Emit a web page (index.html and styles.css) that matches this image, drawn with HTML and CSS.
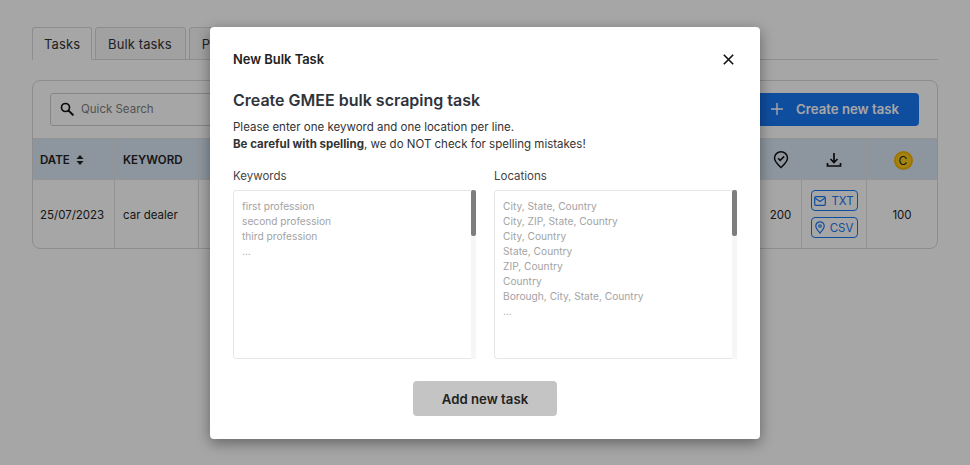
FILE: index.html
```html
<!DOCTYPE html>
<html lang="en">
<head>
  <meta charset="UTF-8">
  <title>New Bulk Task</title>
  <link rel="stylesheet" href="styles.css">
</head>
<body>
  <div class="page">
    <div class="tabs">
      <div class="tab active">Tasks</div>
      <div class="tab">Bulk tasks</div>
      <div class="tab">Proxies</div>
      <div class="tab">Settings</div>
    </div>

    <div class="panel">
      <div class="toolbar">
        <div class="search">
          <svg width="14" height="14" viewBox="0 0 14 14"><circle cx="5.500" cy="5.500" r="4" fill="none" stroke="#111" stroke-width="1.700"/><path d="M8.600 8.600 12.800 12.800" stroke="#111" stroke-width="2" stroke-linecap="round"/></svg>
          <span>Quick Search</span>
        </div>
        <div class="create">
          <svg width="14" height="14" viewBox="0 0 14 14"><path d="M7 1v12M1 7h12" stroke="#fff" stroke-width="1.400" fill="none"/></svg>
          <span>Create new task</span>
        </div>
      </div>

      <div class="row head">
        <div class="cell">DATE
          <svg class="sort" width="8" height="10" viewBox="0 0 8 10"><path d="M4 0 7.500 4H.5zM4 10 .5 6h7z" fill="#222"/></svg>
        </div>
        <div class="cell">KEYWORD</div>
        <div class="cell"></div>
        <div class="cell mid">
          <svg width="16" height="18" viewBox="0 0 16 18"><path d="M8 16.500C4.500 13.200 1.500 10.600 1.500 7a6.500 6.200 0 0 1 13 0c0 3.600-3 6.200-6.500 9.500z" fill="none" stroke="#111" stroke-width="1.500"/><path d="m5 7.200 2.200 2.200 4-4" fill="none" stroke="#111" stroke-width="1.500"/></svg>
        </div>
        <div class="cell mid">
          <svg width="16" height="16" viewBox="0 0 16 16"><path d="M8 1v9M4.500 7 8 10.500 11.500 7" fill="none" stroke="#111" stroke-width="1.700"/><path d="M1.500 11v3h13v-3" fill="none" stroke="#111" stroke-width="1.700"/></svg>
        </div>
        <div class="cell mid"><span class="coin">C</span></div>
      </div>

      <div class="row body">
        <div class="cell">25/07/2023</div>
        <div class="cell">car dealer</div>
        <div class="cell"></div>
        <div class="cell mid">200</div>
        <div class="cell mid stack">
          <span class="tag">
            <svg width="12" height="10" viewBox="0 0 12 10"><rect x=".7" y=".7" width="10.600" height="8.600" rx="1" fill="none" stroke="#1878f0" stroke-width="1.200"/><path d="m1 2 5 3.500L11 2" fill="none" stroke="#1878f0" stroke-width="1.200"/></svg>
            TXT
          </span>
          <span class="tag">
            <svg width="10" height="13" viewBox="0 0 10 13"><path d="M5 12C2.500 9.300.8 7.500.8 5a4.200 4.200 0 0 1 8.400 0c0 2.500-1.700 4.300-4.200 7z" fill="none" stroke="#1878f0" stroke-width="1.200"/><circle cx="5" cy="5" r="1.300" fill="none" stroke="#1878f0" stroke-width="1.100"/></svg>
            CSV
          </span>
        </div>
        <div class="cell mid">100</div>
      </div>
    </div>
  </div>

  <div class="overlay"></div>

  <div class="modal">
    <div class="modal-top">
      <span class="modal-name">New Bulk Task</span>
      <svg width="11" height="11" viewBox="0 0 11 11"><path d="m.8.8 9.400 9.400M10.200.8.8 10.200" stroke="#111" stroke-width="1.600" fill="none"/></svg>
    </div>
    <h2>Create GMEE bulk scraping task</h2>
    <p class="intro">Please enter one keyword and one location per line.<br><b>Be careful with spelling</b>, we do NOT check for spelling mistakes!</p>
    <div class="fields">
      <div class="field">
        <label>Keywords</label>
        <div class="box">
          <div class="hint">first profession<br>second profession<br>third profession<br>...</div>
          <div class="track"><div class="thumb"></div></div>
        </div>
      </div>
      <div class="field">
        <label>Locations</label>
        <div class="box">
          <div class="hint">City, State, Country<br>City, ZIP, State, Country<br>City, Country<br>State, Country<br>ZIP, Country<br>Country<br>Borough, City, State, Country<br>...</div>
          <div class="track"><div class="thumb"></div></div>
        </div>
      </div>
    </div>
    <div class="actions">
      <div class="add">Add new task</div>
    </div>
  </div>
</body>
</html>
```

FILE: styles.css
```css
* {
  box-sizing: border-box;
}

body {
  margin: 0;
  height: 465px;
  overflow: hidden;
  background: #fff;
  font-family: 'Inter', sans-serif;
  color: #262626;
}

.page {
  padding: 27px 32px 0;
}

.tabs {
  display: flex;
  gap: 3px;
  height: 33px;
  border-bottom: 1px solid #d9d9d9;
}

.tab {
  height: 33px;
  padding: 0 13px 0 12px;
  display: flex;
  align-items: center;
  font-size: 13px;
  letter-spacing: 0.1px;
  color: #333;
  border: 1px solid #d9d9d9;
  border-radius: 3px 3px 0 0;
  background: #f7f7f7;
}

.tab.active {
  padding: 0 11px;
  background: #fff;
  border-bottom-color: #fff;
}

.panel {
  margin-top: 20px;
  border: 1px solid #d9d9d9;
  border-radius: 8px;
  height: 169px;
  overflow: hidden;
}

.toolbar {
  height: 58px;
  display: flex;
  justify-content: space-between;
  align-items: center;
  padding: 0 18px 0 17px;
  border-bottom: 1px solid #e2e2e2;
}

.search {
  width: 300px;
  height: 33px;
  padding: 0 9px 1px;
  display: flex;
  align-items: center;
  gap: 7px;
  font-size: 11.500px;
  color: #808080;
  border: 1px solid #ccc;
  border-radius: 3px;
}

.create {
  width: 290px;
  height: 33px;
  padding: 0 20px 1px 0;
  display: flex;
  align-items: center;
  justify-content: flex-end;
  gap: 12px;
  font-size: 13.200px;
  font-weight: 600;
  color: #fff;
  background: #1878f5;
  border-radius: 4px;
}

.row {
  display: grid;
  grid-template-columns: 82px 84px 1fr 42px 65px 70px;
}

.head {
  height: 41px;
  background: #d9e6f5;
  font-size: 11.500px;
  font-weight: 600;
  color: #222;
  border-bottom: 1px solid #e2e2e2;
}

.head .cell {
  padding-top: 2px;
}

.body {
  height: 68px;
  font-size: 11.500px;
}

.body .cell {
  padding-top: 2px;
}

.cell {
  display: flex;
  align-items: center;
  gap: 6px;
  padding-left: 7px;
  border-right: 1px solid #e2e2e2;
}

.cell:nth-child(2) {
  padding-left: 8px;
}

.cell:last-child {
  border-right: none;
}

.mid {
  justify-content: center;
  padding-left: 0;
}

.body .stack {
  flex-direction: column;
  padding-top: 0;
}

.tag {
  width: 47px;
  height: 21px;
  display: flex;
  align-items: center;
  justify-content: center;
  gap: 5px;
  font-size: 11.500px;
  color: #1878f0;
  border: 1px solid #1878f0;
  border-radius: 4px;
}

.coin {
  width: 19px;
  height: 19px;
  margin-left: 2px;
  display: flex;
  align-items: center;
  justify-content: center;
  font-size: 12px;
  font-weight: 400;
  color: #222;
  background: #ffc91a;
  border: 2px solid #f0b400;
  border-radius: 50%;
}

.overlay {
  position: absolute;
  inset: 0;
  background: rgba(0, 0, 0, 0.35);
}

.modal {
  position: absolute;
  left: 210px;
  top: 27px;
  width: 550px;
  height: 412px;
  padding: 0 23px;
  background: #fff;
  border-radius: 4px;
  box-shadow: 0 4px 14px rgba(0, 0, 0, 0.4);
}

.modal-top {
  height: 64px;
  display: flex;
  justify-content: space-between;
  align-items: center;
  padding-right: 3px;
}

.modal-name {
  font-size: 12.900px;
  font-weight: 600;
  color: #222;
}

h2 {
  margin: 0;
  font-size: 16px;
  line-height: 18px;
  font-weight: 600;
  color: #2f343b;
}

.intro {
  margin: 10px 0 0;
  font-size: 11.500px;
  line-height: 17px;
  color: #333;
}

.fields {
  margin-top: 15px;
  display: grid;
  grid-template-columns: 243px 243px;
  gap: 18px;
}

.field label {
  display: block;
  font-size: 11.500px;
  line-height: 16px;
  color: #444;
  margin-bottom: 6px;
}

.box {
  position: relative;
  height: 169px;
  padding: 8px 8px;
  border: 1px solid #e6e6e6;
  border-radius: 3px;
}

.hint {
  font-size: 10.200px;
  line-height: 15px;
  color: #a3a3a3;
}

.track {
  position: absolute;
  top: -1px;
  right: -1px;
  bottom: -1px;
  width: 5px;
  background: #f6f6f6;
}

.thumb {
  height: 46px;
  background: #7d7d7d;
  border-radius: 2px;
}

.actions {
  margin-top: 22px;
  display: flex;
  justify-content: center;
}

.add {
  width: 144px;
  height: 35px;
  display: flex;
  align-items: center;
  justify-content: center;
  font-size: 13.200px;
  font-weight: 600;
  color: #222;
  background: #c4c4c4;
  border-radius: 4px;
}
```
